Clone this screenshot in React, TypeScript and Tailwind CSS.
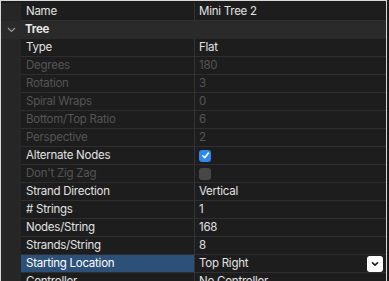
import React from "react";

type Row = {
  name: string;
  value?: string;
  disabled?: boolean;
  checkbox?: "on" | "off";
  selected?: boolean;
  dropdown?: boolean;
};

const rows: Row[] = [
  { name: "Type", value: "Flat" },
  { name: "Degrees", value: "180", disabled: true },
  { name: "Rotation", value: "3", disabled: true },
  { name: "Spiral Wraps", value: "0", disabled: true },
  { name: "Bottom/Top Ratio", value: "6", disabled: true },
  { name: "Perspective", value: "2", disabled: true },
  { name: "Alternate Nodes", checkbox: "on" },
  { name: "Don't Zig Zag", checkbox: "off", disabled: true },
  { name: "Strand Direction", value: "Vertical" },
  { name: "# Strings", value: "1" },
  { name: "Nodes/String", value: "168" },
  { name: "Strands/String", value: "8" },
  { name: "Starting Location", value: "Top Right", selected: true, dropdown: true },
  { name: "Controller", value: "No Controller" },
];

function PropRow({ r }: { r: Row }) {
  const txt = r.disabled ? "text-[#555555]" : "text-[#e2e2e2]";
  return (
    <div className="flex h-[18px] shrink-0">
      <div className="w-[20px] shrink-0 bg-[#262626]" />
      <div
        className={`flex w-[173px] shrink-0 items-center border-b border-[#2e2e2e] pl-[5px] ${
          r.selected ? "bg-[#2d5079] text-white" : `bg-[#1d1d1d] ${txt}`
        }`}
      >
        {r.name}
      </div>
      <div className="w-[1px] shrink-0 bg-[#333333]" />
      <div className="flex flex-1 items-center justify-between border-b border-[#2e2e2e] bg-[#1d1d1d] pl-[4px] pr-[3px]">
        {r.checkbox === "on" && (
          <div className="flex h-[12px] w-[12px] items-center justify-center rounded-[3px] bg-[#2e88ee]">
            <svg width="9" height="9" viewBox="0 0 10 10">
              <path d="M2 5.3 L4.2 7.5 L8.2 2.3" fill="none" stroke="white" strokeWidth="1.8" strokeLinecap="round" strokeLinejoin="round" />
            </svg>
          </div>
        )}
        {r.checkbox === "off" && <div className="h-[12px] w-[12px] rounded-[3px] bg-[#474747]" />}
        {r.value !== undefined && <span className={txt}>{r.value}</span>}
        {r.dropdown && (
          <div className="flex h-[16px] w-[16px] items-center justify-center rounded-[3px] bg-white">
            <svg width="8" height="6" viewBox="0 0 8 6">
              <path d="M1.5 1.8 L4 4.2 L6.5 1.8" fill="none" stroke="#1d1d1d" strokeWidth="1.6" strokeLinecap="round" strokeLinejoin="round" />
            </svg>
          </div>
        )}
      </div>
    </div>
  );
}

export default function App() {
  return (
    <div className="h-[281px] w-[389px] overflow-hidden bg-[#1d1d1d]" style={{ fontFamily: "Inter, 'Noto Sans', sans-serif" }}>
      <div className="flex h-full w-[387px] flex-col border-l border-r border-t border-[#d8d8d8] pt-[2px] text-[11.5px] leading-none tracking-[-0.25px]">
        <div className="flex h-[18px] shrink-0">
          <div className="w-[20px] shrink-0 bg-[#262626]" />
          <div className="flex w-[173px] shrink-0 items-center border-b border-[#2e2e2e] bg-[#1d1d1d] pl-[5px] text-[#e2e2e2]">Name</div>
          <div className="w-[1px] shrink-0 bg-[#333333]" />
          <div className="flex flex-1 items-center border-b border-[#2e2e2e] bg-[#1d1d1d] pl-[4px] text-[#e2e2e2]">Mini Tree 2</div>
        </div>
        <div className="flex h-[18px] shrink-0 items-center bg-[#2a2a2a] font-bold text-[#e6e6e6]">
          <div className="flex w-[20px] items-center justify-center">
            <svg width="9" height="6" viewBox="0 0 9 6">
              <path d="M1 1 L4.5 4.5 L8 1" fill="none" stroke="#9a9a9a" strokeWidth="1.2" />
            </svg>
          </div>
          <span className="pl-[4px]">Tree</span>
        </div>
        {rows.map((r) => (
          <PropRow key={r.name} r={r} />
        ))}
      </div>
    </div>
  );
}
